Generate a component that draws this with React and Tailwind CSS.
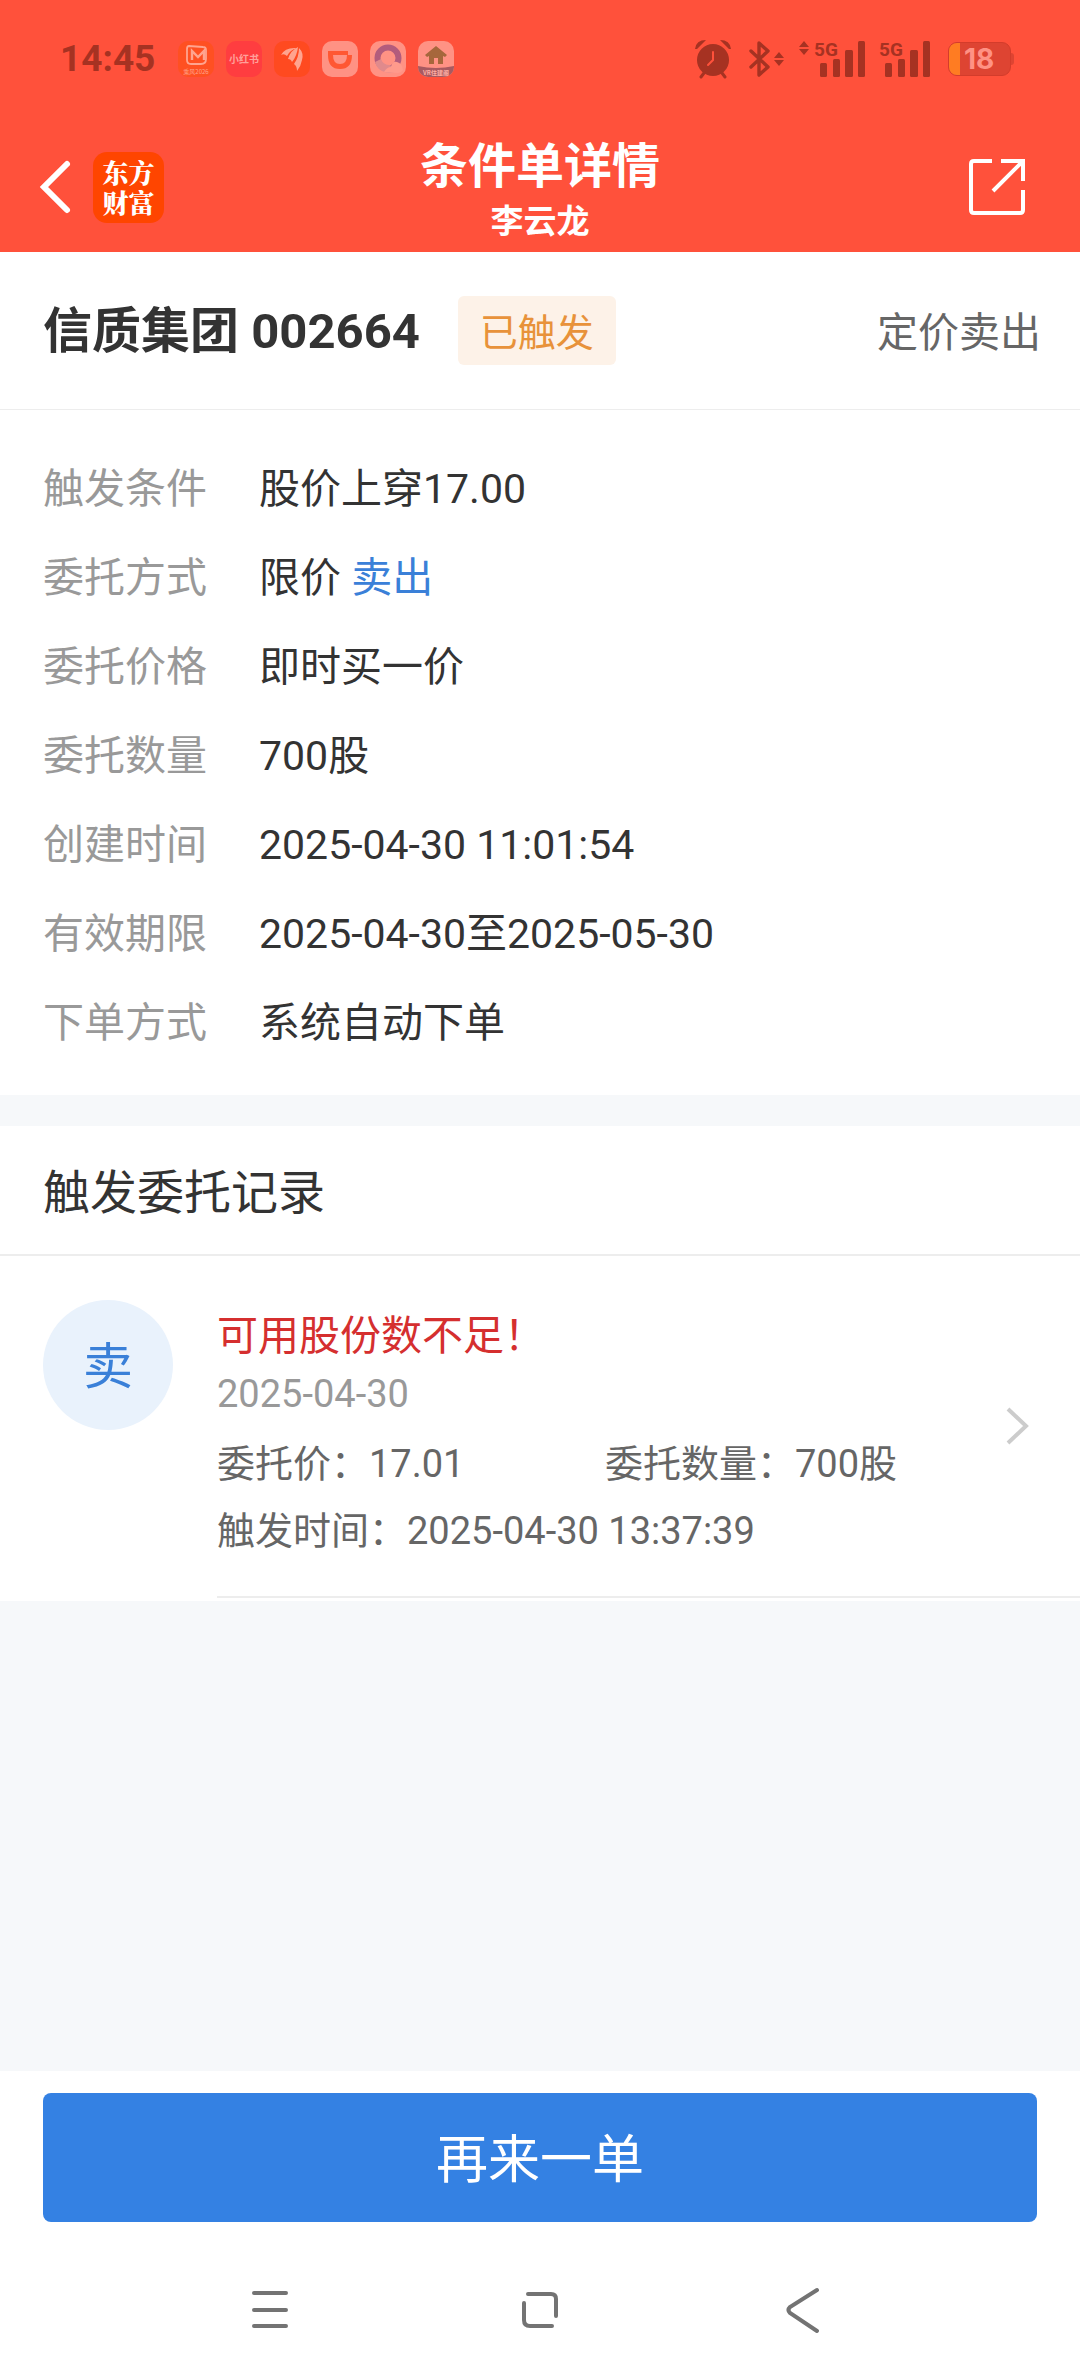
import React from 'react';

const details = [
  { label: '触发条件', value: '股价上穿17.00' },
  { label: '委托方式', value: '限价', side: '卖出' },
  { label: '委托价格', value: '即时买一价' },
  { label: '委托数量', value: '700股' },
  { label: '创建时间', value: '2025-04-30 11:01:54' },
  { label: '有效期限', value: '2025-04-30至2025-05-30' },
  { label: '下单方式', value: '系统自动下单' },
];

function AppTile({ className, children }) {
  return (
    <svg viewBox="0 0 36 36" className={`size-9 rounded-[10px] ${className}`} aria-hidden="true">
      {children}
    </svg>
  );
}

function NotificationIcons() {
  return (
    <div className="flex gap-3">
      <AppTile className="bg-[#ff5022]">
        <path d="M11 5l14 1q3 0 3 3v9q0 5-5 5H13q-4 0-4-4V8q0-3 2-3z" fill="none" stroke="#ffa48f" strokeWidth="1.8" />
        <path d="M14 19v-9l6 6 6-6v9" fill="none" stroke="#ffa48f" strokeWidth="2.4" />
        <text x="18" y="33" textAnchor="middle" fontSize="6" fill="#ffa48f" className="font-['Noto_Sans_CJK_SC',sans-serif]">乘风2026</text>
      </AppTile>
      <AppTile className="bg-[#ff3d40]">
        <text x="18" y="22" textAnchor="middle" fontSize="10" fontWeight="bold" fill="#ffa09b" className="font-['Noto_Sans_CJK_SC',sans-serif]">小红书</text>
      </AppTile>
      <AppTile className="bg-[#ff4a20]">
        <path d="M7 14Q11 6 23 7Q16 9 13 15Q10 12 7 14z" fill="#ffa48f" />
        <path d="M14 18Q16 10 24 6Q23 15 18 21Q17 18 14 18z" fill="#ffa48f" />
        <path d="M20 23Q25 16 25 7Q30 12 28 19Q27 25 23 30Q23 25 20 23z" fill="#ffa48f" />
      </AppTile>
      <AppTile className="bg-[#ff9284]">
        <path d="M6 10h20v4h4q0 14-12 14T6 14z" fill="#ff5733" />
        <path d="M11 14h14q0 9-7 9t-7-9z" fill="#ff9284" />
      </AppTile>
      <AppTile className="bg-[#ff9284]">
        <circle cx="18" cy="17" r="10.5" fill="none" stroke="#b35c7c" strokeWidth="6" />
        <path d="M5 21q2 8 10 10 6 2 12-1l-7-6q-7 0-9-6z" fill="#e08a8c" />
        <path d="M14 31q3-5 7-5 1-6 6-5 5 1 6 8-2 3-5 3z" fill="#ff9a8c" />
      </AppTile>
      <AppTile className="bg-[#ff9284]">
        <path d="M18 5L7 14l2 2 2-1v8h5v-6h4v6h5v-8l2 1 2-2z" fill="#a6673c" />
        <path d="M0 25q18 4 36 0v11H0z" fill="#a85a60" />
        <text x="18" y="34" textAnchor="middle" fontSize="6" fontWeight="bold" fill="#ffb0a4" className="font-['Noto_Sans_CJK_SC',sans-serif]">VR住建阁</text>
      </AppTile>
    </div>
  );
}

function Signal({ arrows }) {
  return (
    <svg
      viewBox={arrows ? '0 0 68 38' : '14 0 54 38'}
      className={arrows ? 'h-[38px] w-[68px] overflow-visible' : 'h-[38px] w-[54px] overflow-visible'}
      fill="#a63222"
      aria-hidden="true"
    >
      {arrows && <path d="M5 1l5 6H0zM5 15l5-6H0z" />}
      <text x="15" y="16" fontSize="19" fontWeight="bold" className="font-['Roboto',sans-serif]">5G</text>
      <rect x="21" y="23" width="7" height="14" rx="1.5" />
      <rect x="34" y="19" width="7" height="18" rx="1.5" />
      <rect x="46" y="10" width="8" height="27" rx="1.5" />
      <rect x="59" y="1" width="7" height="36" rx="1.5" />
    </svg>
  );
}

function StatusBar() {
  return (
    <div className="flex h-[118px] items-center justify-between pr-[66px] pl-[60px]">
      <div className="flex items-center gap-[26px]">
        <span className="w-[92px] text-[37px] leading-9 font-bold text-[#a63222]">14:45</span>
        <NotificationIcons />
      </div>
      <div className="flex items-center">
        <svg viewBox="0 0 38 40" className="mr-[17px] h-10 w-[38px]" aria-hidden="true">
          <path d="M1 10Q2 1 12 1L3 10zM37 10Q36 1 26 1l9 9z" fill="#a63222" />
          <circle cx="19" cy="21" r="16" fill="#a63222" />
          <path d="M10 34l-3 4M28 34l3 4" stroke="#a63222" strokeWidth="3" strokeLinecap="round" />
          <path d="M19 13v8l-5 5" fill="none" stroke="#ff513b" strokeWidth="2" strokeLinecap="round" />
        </svg>
        <svg viewBox="0 0 36 38" className="mr-[14px] h-[38px] w-9" aria-hidden="true">
          <path d="M2 11l17 16-9 8V3l9 8L2 27" fill="none" stroke="#a63222" strokeWidth="3.4" strokeLinecap="round" strokeLinejoin="round" />
          <path d="M30 12l5 6H25zM30 26l5-6H25z" fill="#a63222" />
        </svg>
        <div className="mr-[11px]"><Signal arrows /></div>
        <div className="mr-4"><Signal /></div>
        <div className="flex items-center">
          <div className="flex h-[34px] w-[63px] items-center overflow-hidden rounded-[9px] border border-[#d43c2b] bg-[#de4432]">
            <div className="h-full w-[11px] bg-[#ff7c22]" />
            <span className="ml-1 font-['Inter',sans-serif] text-[28px] leading-[34px] font-bold text-[#ff9284]">18</span>
          </div>
          <div className="h-3 w-[3px] rounded-r bg-[#de4432]" />
        </div>
      </div>
    </div>
  );
}

function Header() {
  return (
    <header className="bg-[#ff513b]">
      <StatusBar />
      <div className="grid h-[134px] grid-cols-[1fr_auto_1fr] items-center px-[37px] pt-1">
        <div className="flex items-center gap-5">
          <button aria-label="返回">
            <svg viewBox="0 0 36 56" className="h-14 w-9">
              <path d="M30 5L7 28l23 23" fill="none" stroke="#fff" strokeWidth="6" strokeLinecap="round" />
            </svg>
          </button>
          <div className="grid size-[71px] place-content-center rounded-[14px] bg-[#ff4500] font-['Noto_Serif_CJK_SC','Noto_Sans_CJK_SC',serif] text-[26px] font-black text-white">
            <p className="w-[52px] text-center leading-[30px]">东方财富</p>
          </div>
        </div>
        <div className="pt-[10px] text-center font-bold text-white">
          <h1 className="text-[48px] leading-[60px]">条件单详情</h1>
          <p className="text-[33px] leading-[50px]">李云龙</p>
        </div>
        <button aria-label="分享" className="mr-4 justify-self-end">
          <svg viewBox="0 0 60 60" className="size-[60px]" fill="none" stroke="#fff" strokeWidth="4">
            <path d="M25 4H7q-3 0-3 3v46q0 3 3 3h46q3 0 3-3V33M34 4h22v20M56 4L26 34" />
          </svg>
        </button>
      </div>
    </header>
  );
}

function Summary() {
  return (
    <section className="flex h-[158px] items-center justify-between border-b border-[#ededed] bg-white pr-[39px] pl-[43px]">
      <div className="flex items-center gap-[38px]">
        <h2 className="pt-[2px] text-[49px] leading-[60px] font-bold text-[#333]">信质集团 002664</h2>
        <span className="rounded-md bg-[#fdf2e8] px-[22px] pt-[6px] text-[38px] leading-[63px] text-[#e8923a]">已触发</span>
      </div>
      <span className="pt-[6px] text-[41px] text-[#666]">定价卖出</span>
    </section>
  );
}

function Details() {
  return (
    <dl className="bg-white px-[43px] pt-[35px] pb-[27px] text-[41px] leading-[89px]">
      {details.map((d) => (
        <div key={d.label} className="flex">
          <dt className="w-[216px] text-[#999]">{d.label}</dt>
          <dd className="text-[#333]">
            {d.value}
            {d.side && <span className="text-[#3a80d8]"> {d.side}</span>}
          </dd>
        </div>
      ))}
    </dl>
  );
}

function Records() {
  return (
    <section className="mt-[31px] bg-white">
      <h3 className="border-b-2 border-[#ededed] px-[43px] pt-[6px] text-[47px] leading-[122px] text-[#333]">触发委托记录</h3>
      <a href="#record" className="flex pl-[43px]">
        <div className="mt-11 flex size-[130px] shrink-0 items-center justify-center rounded-full bg-[#e9f2fc] pt-1 text-[50px] text-[#3a80d8]">卖</div>
        <div className="mb-[3px] ml-[44px] flex flex-1 items-center justify-between border-b-2 border-[#ededed] pr-[48px]">
          <div className="flex-1 pt-[50px] pb-[31px] text-[38px] leading-[67px] text-[#666]">
            <p className="text-[41px] leading-[60px] text-[#d52f2f]">可用股份数不足！</p>
            <p className="leading-[56px] text-[#999]">2025-04-30</p>
            <div className="mt-[9px] grid grid-cols-[388px_1fr]">
              <span>委托价：17.01</span>
              <span>委托数量：700股</span>
            </div>
            <p>触发时间：2025-04-30 13:37:39</p>
          </div>
          <svg viewBox="0 0 28 40" className="h-10 w-7" fill="none" stroke="#ccc" strokeWidth="4" aria-hidden="true">
            <path d="M4 3l18 17L4 37" />
          </svg>
        </div>
      </a>
    </section>
  );
}

function SystemNav() {
  return (
    <nav className="mx-auto grid h-[154px] w-3/4 grid-cols-3 place-items-center pt-[22px]">
      <button aria-label="菜单">
        <svg viewBox="0 0 48 48" className="size-12" stroke="#737373" strokeWidth="4" strokeLinecap="round">
          <path d="M8 7h32M8 24h32M8 40h32" />
        </svg>
      </button>
      <button aria-label="主页">
        <svg viewBox="0 0 48 48" className="size-12" fill="none" stroke="#737373" strokeWidth="4" strokeLinecap="round">
          <path d="M12 8h23q5 0 5 5v17M8 17v17q0 6 6 6h22" />
        </svg>
      </button>
      <button aria-label="后退">
        <svg viewBox="0 0 48 48" className="size-12" fill="none" stroke="#737373" strokeWidth="4" strokeLinecap="round">
          <path d="M31 4L4 21q-3 3 0 6l27 18" />
        </svg>
      </button>
    </nav>
  );
}

export default function App() {
  return (
    <div className="flex min-h-screen flex-col bg-[#f6f8fa] font-['Roboto','Noto_Sans_CJK_SC',sans-serif]" lang="zh-CN">
      <Header />
      <main className="flex-1">
        <Summary />
        <Details />
        <Records />
      </main>
      <footer className="bg-white pt-[22px]">
        <div className="px-[43px]">
          <button className="h-[129px] w-full rounded-lg bg-[#3481e3] pt-[6px] text-[52px] text-white">再来一单</button>
        </div>
        <SystemNav />
      </footer>
    </div>
  );
}
